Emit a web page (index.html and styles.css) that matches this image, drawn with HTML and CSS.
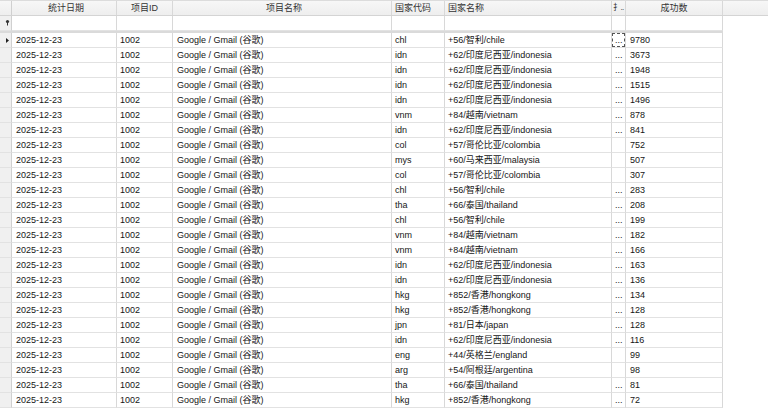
FILE: index.html
```html
<!DOCTYPE html>
<html>
<head>
<meta charset="utf-8">
<link rel="stylesheet" href="styles.css">
</head>
<body>
<div class="grid">
  <div class="hdr">
    <div class="c ind"></div>
    <div class="c date center">统计日期</div>
    <div class="c id center">项目ID</div>
    <div class="c name center">项目名称</div>
    <div class="c code">国家代码</div>
    <div class="c cn">国家名称</div>
    <div class="c dot clip">扌..</div>
    <div class="c cnt center">成功数</div>
    <div class="c rest"></div>
  </div>
  <div class="row filter">
    <div class="c ind"><svg width="12" height="15" viewBox="0 0 12 15"><circle cx="7.5" cy="5.5" r="1.6" fill="#333"/><rect x="7" y="6" width="1" height="3.5" fill="#333"/></svg></div>
    <div class="c date"></div><div class="c id"></div><div class="c name"></div><div class="c code"></div><div class="c cn"></div><div class="c dot"></div><div class="c cnt"></div>
  </div>
  <div class="sep"></div>
  <div class="body">
    <div class="row"><div class="c ind"><svg width="12" height="15" viewBox="0 0 12 15"><path d="M6 5 L9 7.5 L6 10 Z" fill="#222"/></svg></div><div class="c date">2025-12-23</div><div class="c id">1002</div><div class="c name">Google / Gmail (谷歌)</div><div class="c code">chl</div><div class="c cn">+56/智利/chile</div><div class="c dot"><span class="focus">...</span></div><div class="c cnt">9780</div></div>
    <div class="row"><div class="c ind"></div><div class="c date">2025-12-23</div><div class="c id">1002</div><div class="c name">Google / Gmail (谷歌)</div><div class="c code">idn</div><div class="c cn">+62/印度尼西亚/indonesia</div><div class="c dot">...</div><div class="c cnt">3673</div></div>
    <div class="row"><div class="c ind"></div><div class="c date">2025-12-23</div><div class="c id">1002</div><div class="c name">Google / Gmail (谷歌)</div><div class="c code">idn</div><div class="c cn">+62/印度尼西亚/indonesia</div><div class="c dot">...</div><div class="c cnt">1948</div></div>
    <div class="row"><div class="c ind"></div><div class="c date">2025-12-23</div><div class="c id">1002</div><div class="c name">Google / Gmail (谷歌)</div><div class="c code">idn</div><div class="c cn">+62/印度尼西亚/indonesia</div><div class="c dot">...</div><div class="c cnt">1515</div></div>
    <div class="row"><div class="c ind"></div><div class="c date">2025-12-23</div><div class="c id">1002</div><div class="c name">Google / Gmail (谷歌)</div><div class="c code">idn</div><div class="c cn">+62/印度尼西亚/indonesia</div><div class="c dot">...</div><div class="c cnt">1496</div></div>
    <div class="row"><div class="c ind"></div><div class="c date">2025-12-23</div><div class="c id">1002</div><div class="c name">Google / Gmail (谷歌)</div><div class="c code">vnm</div><div class="c cn">+84/越南/vietnam</div><div class="c dot">...</div><div class="c cnt">878</div></div>
    <div class="row"><div class="c ind"></div><div class="c date">2025-12-23</div><div class="c id">1002</div><div class="c name">Google / Gmail (谷歌)</div><div class="c code">idn</div><div class="c cn">+62/印度尼西亚/indonesia</div><div class="c dot">...</div><div class="c cnt">841</div></div>
    <div class="row"><div class="c ind"></div><div class="c date">2025-12-23</div><div class="c id">1002</div><div class="c name">Google / Gmail (谷歌)</div><div class="c code">col</div><div class="c cn">+57/哥伦比亚/colombia</div><div class="c dot"></div><div class="c cnt">752</div></div>
    <div class="row"><div class="c ind"></div><div class="c date">2025-12-23</div><div class="c id">1002</div><div class="c name">Google / Gmail (谷歌)</div><div class="c code">mys</div><div class="c cn">+60/马来西亚/malaysia</div><div class="c dot"></div><div class="c cnt">507</div></div>
    <div class="row"><div class="c ind"></div><div class="c date">2025-12-23</div><div class="c id">1002</div><div class="c name">Google / Gmail (谷歌)</div><div class="c code">col</div><div class="c cn">+57/哥伦比亚/colombia</div><div class="c dot"></div><div class="c cnt">307</div></div>
    <div class="row"><div class="c ind"></div><div class="c date">2025-12-23</div><div class="c id">1002</div><div class="c name">Google / Gmail (谷歌)</div><div class="c code">chl</div><div class="c cn">+56/智利/chile</div><div class="c dot">...</div><div class="c cnt">283</div></div>
    <div class="row"><div class="c ind"></div><div class="c date">2025-12-23</div><div class="c id">1002</div><div class="c name">Google / Gmail (谷歌)</div><div class="c code">tha</div><div class="c cn">+66/泰国/thailand</div><div class="c dot">...</div><div class="c cnt">208</div></div>
    <div class="row"><div class="c ind"></div><div class="c date">2025-12-23</div><div class="c id">1002</div><div class="c name">Google / Gmail (谷歌)</div><div class="c code">chl</div><div class="c cn">+56/智利/chile</div><div class="c dot">...</div><div class="c cnt">199</div></div>
    <div class="row"><div class="c ind"></div><div class="c date">2025-12-23</div><div class="c id">1002</div><div class="c name">Google / Gmail (谷歌)</div><div class="c code">vnm</div><div class="c cn">+84/越南/vietnam</div><div class="c dot">...</div><div class="c cnt">182</div></div>
    <div class="row"><div class="c ind"></div><div class="c date">2025-12-23</div><div class="c id">1002</div><div class="c name">Google / Gmail (谷歌)</div><div class="c code">vnm</div><div class="c cn">+84/越南/vietnam</div><div class="c dot">...</div><div class="c cnt">166</div></div>
    <div class="row"><div class="c ind"></div><div class="c date">2025-12-23</div><div class="c id">1002</div><div class="c name">Google / Gmail (谷歌)</div><div class="c code">idn</div><div class="c cn">+62/印度尼西亚/indonesia</div><div class="c dot">...</div><div class="c cnt">163</div></div>
    <div class="row"><div class="c ind"></div><div class="c date">2025-12-23</div><div class="c id">1002</div><div class="c name">Google / Gmail (谷歌)</div><div class="c code">idn</div><div class="c cn">+62/印度尼西亚/indonesia</div><div class="c dot">...</div><div class="c cnt">136</div></div>
    <div class="row"><div class="c ind"></div><div class="c date">2025-12-23</div><div class="c id">1002</div><div class="c name">Google / Gmail (谷歌)</div><div class="c code">hkg</div><div class="c cn">+852/香港/hongkong</div><div class="c dot">...</div><div class="c cnt">134</div></div>
    <div class="row"><div class="c ind"></div><div class="c date">2025-12-23</div><div class="c id">1002</div><div class="c name">Google / Gmail (谷歌)</div><div class="c code">hkg</div><div class="c cn">+852/香港/hongkong</div><div class="c dot">...</div><div class="c cnt">128</div></div>
    <div class="row"><div class="c ind"></div><div class="c date">2025-12-23</div><div class="c id">1002</div><div class="c name">Google / Gmail (谷歌)</div><div class="c code">jpn</div><div class="c cn">+81/日本/japan</div><div class="c dot">...</div><div class="c cnt">128</div></div>
    <div class="row"><div class="c ind"></div><div class="c date">2025-12-23</div><div class="c id">1002</div><div class="c name">Google / Gmail (谷歌)</div><div class="c code">idn</div><div class="c cn">+62/印度尼西亚/indonesia</div><div class="c dot">...</div><div class="c cnt">116</div></div>
    <div class="row"><div class="c ind"></div><div class="c date">2025-12-23</div><div class="c id">1002</div><div class="c name">Google / Gmail (谷歌)</div><div class="c code">eng</div><div class="c cn">+44/英格兰/england</div><div class="c dot"></div><div class="c cnt">99</div></div>
    <div class="row"><div class="c ind"></div><div class="c date">2025-12-23</div><div class="c id">1002</div><div class="c name">Google / Gmail (谷歌)</div><div class="c code">arg</div><div class="c cn">+54/阿根廷/argentina</div><div class="c dot"></div><div class="c cnt">98</div></div>
    <div class="row"><div class="c ind"></div><div class="c date">2025-12-23</div><div class="c id">1002</div><div class="c name">Google / Gmail (谷歌)</div><div class="c code">tha</div><div class="c cn">+66/泰国/thailand</div><div class="c dot">...</div><div class="c cnt">81</div></div>
    <div class="row"><div class="c ind"></div><div class="c date">2025-12-23</div><div class="c id">1002</div><div class="c name">Google / Gmail (谷歌)</div><div class="c code">hkg</div><div class="c cn">+852/香港/hongkong</div><div class="c dot">...</div><div class="c cnt">72</div></div>
  </div>
</div>
</body>
</html>
```
FILE: styles.css
```css
html, body {
  margin: 0;
  padding: 0;
  background: #ffffff;
}
body {
  width: 768px;
  height: 410px;
  overflow: hidden;
  font-family: "Liberation Sans", "Noto Sans CJK SC", sans-serif;
  font-size: 9px;
  color: #161616;
}
.grid {
  display: flex;
  flex-direction: column;
}
.hdr {
  display: flex;
  height: 16px;
  box-sizing: border-box;
  border-top: 1px solid #dcdcdc;
  border-bottom: 1px solid #d4d4d4;
  background: linear-gradient(#f7f7f7, #eeeeee);
}
.row {
  display: flex;
  height: 15px;
}
.c {
  box-sizing: border-box;
  border-right: 1px solid #d8d8d8;
  padding-left: 3px;
  white-space: nowrap;
  overflow: hidden;
  line-height: 14px;
  flex: none;
}
.row .c {
  border-bottom: 1px solid #e2e2e2;
}
.hdr .c {
  line-height: 14px;
  color: #333;
}
.center {
  text-align: center;
  padding-left: 0;
}
.ind {
  width: 12px;
  padding: 0;
  background: #f0f0f0;
  border-right-color: #d0d0d0;
}
.ind svg {
  display: block;
}
.hdr .ind {
  background: transparent;
}
.date { width: 105px; padding-left: 4px; }
.id { width: 56px; }
.name { width: 219px; padding-left: 4px; }
.code { width: 53px; }
.cn { width: 167px; }
.dot { width: 14px; padding-left: 3px; }
.hdr .clip {
  padding-left: 1px;
  letter-spacing: -0.6px;
  font-size: 8px;
}
.cnt { width: 97px; padding-left: 4px; }
.hdr .cnt { padding-left: 0; }
.rest { border-right: none; flex: 1; }
.filter .c {
  height: 15px;
}
.filter .c.ind {
  background: #f0f0f0;
}
.sep {
  width: 723px;
  height: 2px;
  background: #dadada;
}
.row .c.dot:has(.focus) {
  padding-left: 0;
}
.focus {
  display: block;
  width: 13px;
  height: 14px;
  box-sizing: border-box;
  border: 1px dashed #555;
  padding-left: 2px;
  line-height: 12px;
}
```
